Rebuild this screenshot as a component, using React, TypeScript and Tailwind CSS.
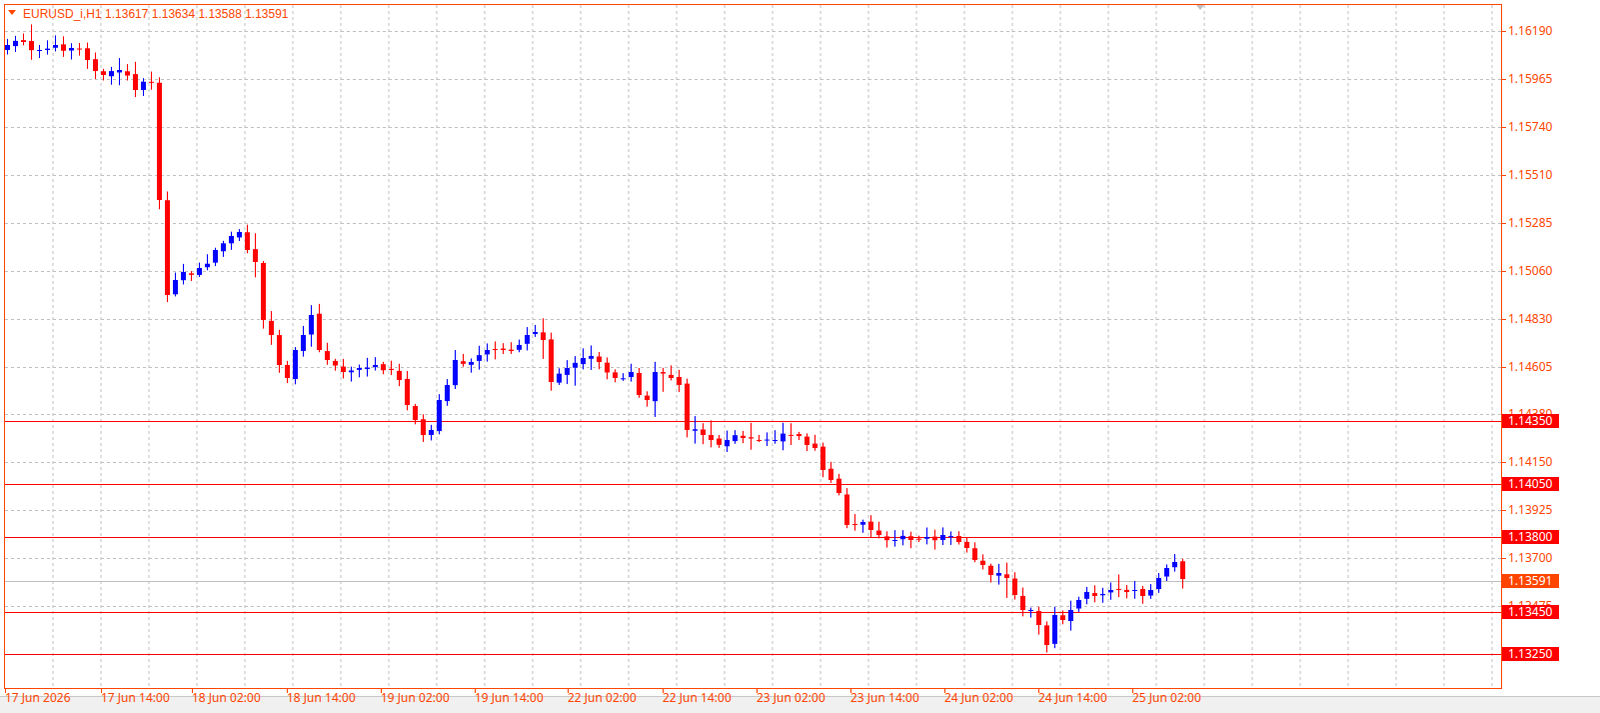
import React from "react";

const P0 = 1.1325;
const yOf = (p: number) => 654 - ((p - P0) * 623) / 0.0294;

const anchors: [number, number][] = [
  [0, 45], [2, 42], [4, 50], [6, 45], [8, 48], [10, 60], [12, 75], [14, 70], [16, 90], [18, 82],
  [19, 200], [20, 295], [21, 280], [22, 272], [24, 268], [26, 250], [28, 236], [29, 232], [30, 250],
  [31, 262], [32, 320], [33, 335], [34, 365], [35, 378], [36, 350], [37, 335], [38, 315], [39, 350],
  [40, 360], [42, 372], [44, 368], [46, 365], [48, 370], [49, 380], [50, 405], [51, 420], [52, 435],
  [53, 430], [54, 400], [55, 385], [56, 360], [58, 362], [60, 350], [62, 350], [64, 345], [65, 335],
  [66, 332], [67, 340], [68, 382], [70, 368], [72, 358], [74, 362], [76, 378], [78, 372], [79, 395],
  [80, 400], [81, 372], [83, 378], [84, 385], [85, 430], [87, 435], [88, 440], [90, 440], [92, 438],
  [94, 440], [96, 440], [98, 435], [100, 445], [101, 448], [102, 470], [103, 480], [104, 493],
  [105, 525], [107, 522], [108, 530], [109, 535], [111, 540], [113, 540], [115, 537], [117, 535],
  [119, 542], [120, 548], [121, 560], [122, 565], [123, 575], [124, 573], [125, 578], [126, 595],
  [127, 610], [128, 610], [129, 625], [130, 645], [131, 615], [132, 620], [133, 610], [134, 600],
  [135, 592], [136, 596], [138, 590], [140, 592], [141, 590], [142, 596], [143, 590], [144, 578],
  [145, 568], [146, 562], [147, 579],
];

function rng(seed: number) {
  return () => {
    seed = (seed * 1664525 + 1013904223) % 4294967296;
    return seed / 4294967296;
  };
}

function buildCandles() {
  const r = rng(7);
  const closes: number[] = [];
  for (let a = 0; a < anchors.length - 1; a++) {
    const [i0, y0] = anchors[a];
    const [i1, y1] = anchors[a + 1];
    for (let i = i0; i < i1; i++) {
      const t = (i - i0) / (i1 - i0);
      closes[i] = y0 + (y1 - y0) * t + (i === i0 ? 0 : (r() - 0.5) * 10);
    }
  }
  closes[147] = anchors[anchors.length - 1][1];
  return closes.map((c, i) => {
    const o = i === 0 ? 50 : closes[i - 1] + (r() - 0.5) * 3;
    const top = Math.min(o, c);
    const bot = Math.max(o, c);
    const big = r() < 0.15 ? 12 : 0;
    return {
      x: 7 + 8 * i,
      o,
      c,
      h: top - 2 - r() * 8 - big * r(),
      l: bot + 2 + r() * 8 + big * r(),
    };
  });
}

const candles = buildCandles();

const priceLabels = [
  "1.16190", "1.15965", "1.15740", "1.15510", "1.15285", "1.15060", "1.14830",
  "1.14605", "1.14380", "1.14150", "1.13925", "1.13700", "1.13475",
];
const levels = [1.1435, 1.1405, 1.138, 1.1345, 1.1325];
const timeLabels: [number, string][] = [
  [5, "17 Jun 2026"], [101, "17 Jun 14:00"], [192, "18 Jun 02:00"], [287, "18 Jun 14:00"],
  [381, "19 Jun 02:00"], [475, "19 Jun 14:00"], [568, "22 Jun 02:00"], [663, "22 Jun 14:00"],
  [757, "23 Jun 02:00"], [851, "23 Jun 14:00"], [945, "24 Jun 02:00"], [1039, "24 Jun 14:00"],
  [1133, "25 Jun 02:00"],
];

const Chart = () => (
  <svg width="1497" height="683" viewBox="5 5 1497 683" className="block">
    {Array.from({ length: 31 }, (_, k) => (
      <line key={k} x1={53 + 48 * k} x2={53 + 48 * k} y1={5} y2={688} stroke="#c0c0c0" strokeDasharray="3 3" />
    ))}
    {priceLabels.map((_, k) => {
      const y = Math.round(31 + 47.93 * k) + 0.5;
      return <line key={k} x1={5} x2={1502} y1={y} y2={y} stroke="#c0c0c0" strokeDasharray="3 3" />;
    })}
    <line x1={5} x2={1502} y1={654.5} y2={654.5} stroke="#c0c0c0" strokeDasharray="3 3" />
    {levels.map((p) => {
      const y = Math.round(yOf(p)) + 0.5;
      return <line key={p} x1={5} x2={1502} y1={y} y2={y} stroke="#ff0000" />;
    })}
    <line x1={5} x2={1502} y1={581.5} y2={581.5} stroke="#c0c0c0" />
    {candles.map((k, i) => {
      const up = k.c < k.o;
      const col = up ? "#0000ff" : "#ff0000";
      const top = Math.min(k.o, k.c);
      const hgt = Math.max(1, Math.abs(k.o - k.c));
      return (
        <g key={i}>
          <line x1={k.x + 0.5} x2={k.x + 0.5} y1={k.h} y2={k.l} stroke={col} />
          <rect x={k.x - 2} y={top} width={5} height={hgt} fill={col} />
        </g>
      );
    })}
    <path d="M1197 5 L1205 5 L1201 10 Z" fill="#c0c0c0" />
    <path d="M8 10 L16 10 L12 15 Z" fill="#ff4500" />
    <text x={23} y={18} fill="#ff4500" fontSize="12" fontFamily="Liberation Sans, sans-serif">
      EURUSD_i,H1  1.13617 1.13634 1.13588 1.13591
    </text>
  </svg>
);

export default function App() {
  return (
    <div className="w-[1601px] h-[713px] bg-[#f0f0f0] font-['Liberation_Sans',sans-serif] text-[12px]">
      <div className="h-[697px] bg-white border-b border-[#c8c8c8] pt-[4px] pl-[4px] flex">
        <div className="flex flex-col">
          <div className="border border-[#ff4500] w-[1499px] h-[685px]">
            <Chart />
          </div>
          <div className="relative h-[7px] text-[#ff4500]">
            {timeLabels.map(([x, t]) => (
              <React.Fragment key={t}>
                <div className="absolute top-0 w-px h-[4px] bg-[#ff4500]" style={{ left: x - 4 }} />
                <div className="absolute top-[2px] whitespace-nowrap leading-[14px]" style={{ left: x - 4 }}>
                  {t}
                </div>
              </React.Fragment>
            ))}
          </div>
        </div>
        <div className="relative w-[98px] text-[#ff4500]">
          {priceLabels.map((t, k) => {
            const y = Math.round(31 + 47.93 * k) - 4;
            return (
              <React.Fragment key={t}>
                <div className="absolute left-0 w-[4px] h-px bg-[#ff4500]" style={{ top: y }} />
                <div className="absolute left-[6px] leading-[14px]" style={{ top: y - 7 }}>{t}</div>
              </React.Fragment>
            );
          })}
          {levels.map((p) => {
            const y = Math.round(yOf(p)) - 4;
            return (
              <div key={p} className="absolute left-0 w-[57px] h-[14px] bg-[#ff0000] text-white pl-[6px] leading-[14px]" style={{ top: y - 7 }}>
                {p.toFixed(5)}
              </div>
            );
          })}
          <div className="absolute left-0 w-[57px] h-[14px] bg-[#ff4500] text-white pl-[6px] leading-[14px]" style={{ top: 581 - 4 - 7 }}>
            1.13591
          </div>
        </div>
      </div>
    </div>
  );
}
